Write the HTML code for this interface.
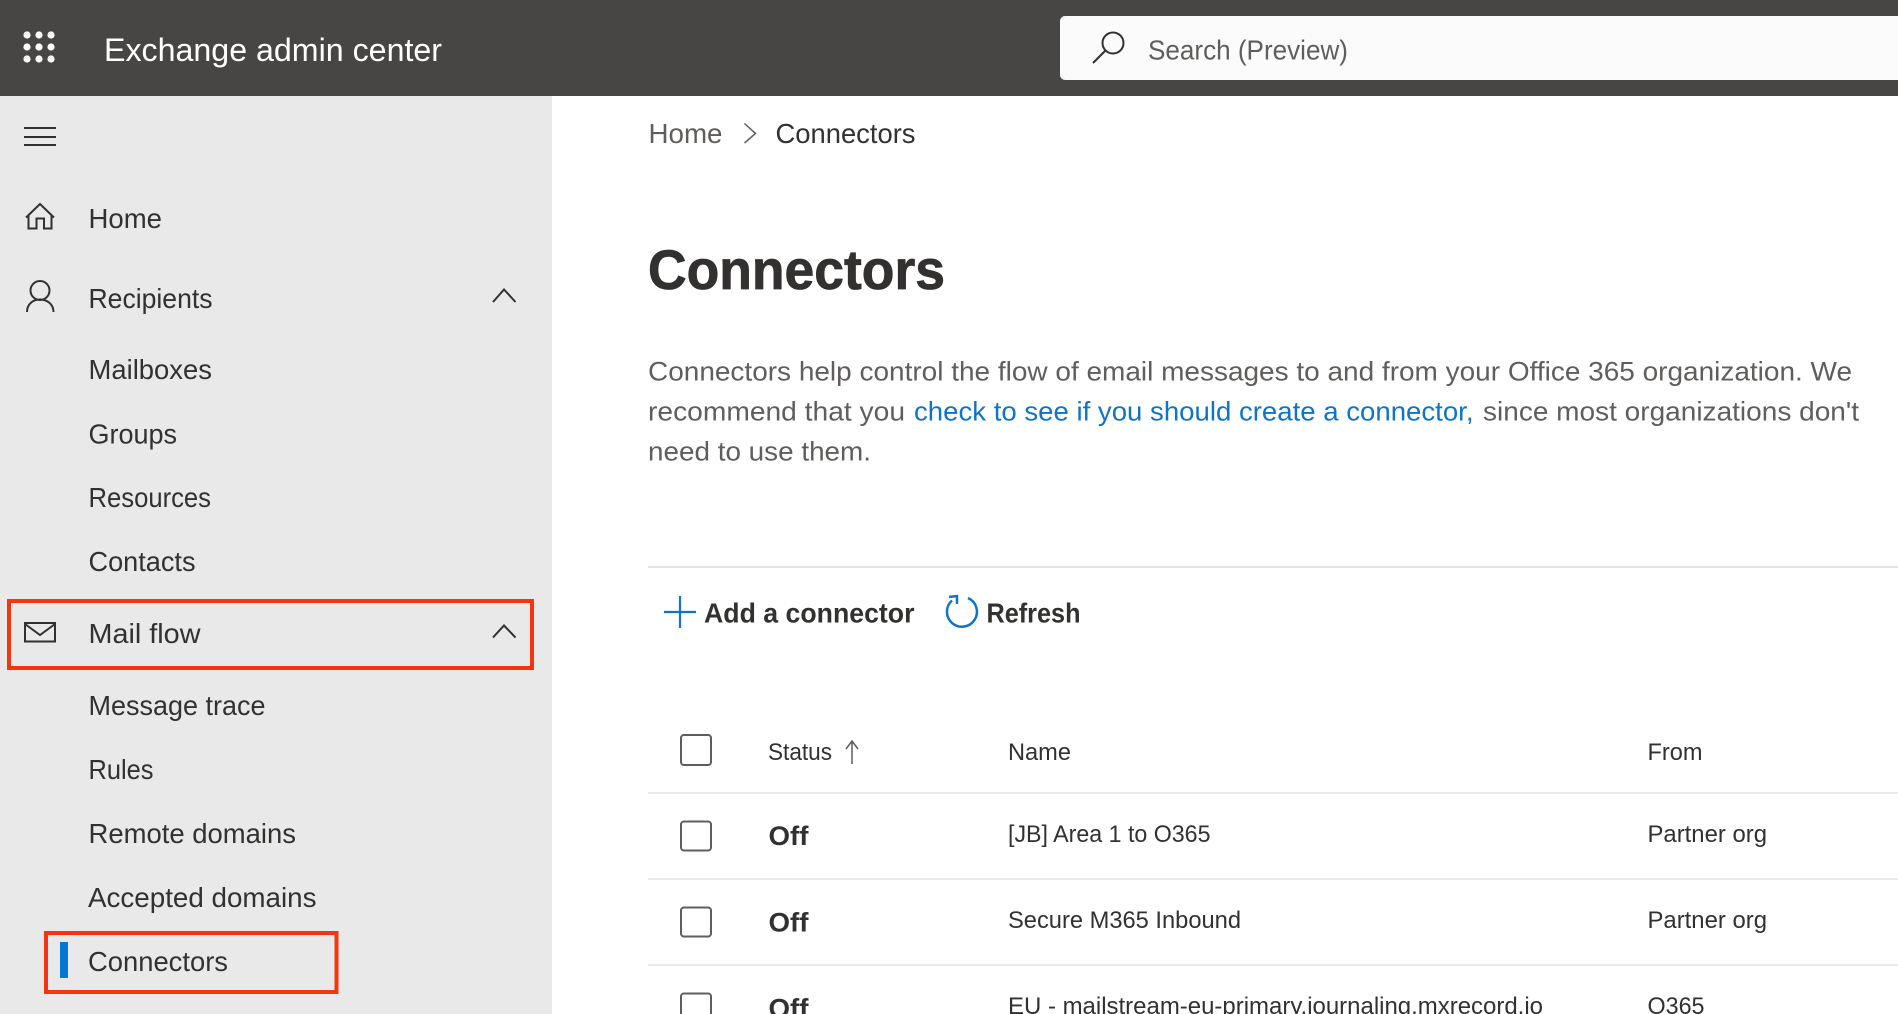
<!DOCTYPE html>
<html lang="en">
<head>
<meta charset="utf-8">
<title>Exchange admin center - Connectors</title>
<style>
html,body{margin:0;padding:0;width:1898px;height:1014px;overflow:hidden;background:#fff}
svg{display:block}
text{font-family:"Liberation Sans",Arial,sans-serif;fill:#323130}
.n{font-size:28px}
.t{font-size:24px}
.p{font-size:27px;fill:#605e5c}
.l{font-size:27px;fill:#0f74c8}
.b{font-size:27px;font-weight:700}
.a{font-size:28px;font-weight:700}
.i{fill:none;stroke:#323130;stroke-width:2}
.c{fill:none;stroke:#605e5c;stroke-width:2}
</style>
</head>
<body>
<svg xmlns="http://www.w3.org/2000/svg" width="1898" height="1014" viewBox="0 0 1898 1014">
<!-- shell -->
<rect width="1898" height="1014" fill="#fff"/>
<rect y="96" width="552" height="918" fill="#e9e9e9"/>
<rect width="1898" height="96" fill="#484644"/>
<rect x="1060" y="16" width="860" height="64" rx="5" fill="#fbfbfb"/>

<!-- waffle -->
<g fill="#fff">
<circle cx="27" cy="35" r="3.600"/><circle cx="39" cy="35" r="3.600"/><circle cx="51" cy="35" r="3.600"/>
<circle cx="27" cy="47" r="3.600"/><circle cx="39" cy="47" r="3.600"/><circle cx="51" cy="47" r="3.600"/>
<circle cx="27" cy="59" r="3.600"/><circle cx="39" cy="59" r="3.600"/><circle cx="51" cy="59" r="3.600"/>
</g>
<text x="104" y="61" font-size="32" style="fill:#fff" textLength="338" lengthAdjust="spacingAndGlyphs">Exchange admin center</text>

<!-- search -->
<circle cx="1113" cy="43" r="10.500" class="i"/>
<path d="M1105.500 50.500L1093 63" class="i"/>
<text x="1148" y="59.500" font-size="28" style="fill:#605e5c" textLength="200" lengthAdjust="spacingAndGlyphs">Search (Preview)</text>

<!-- nav icons -->
<path d="M24 128H56M24 137H56M24 145H56" class="i"/>
<path d="M26 217.500L40 204L54 217.500M28.500 215V228.500H36.500V218.500H44V228.500H51.500V215" class="i"/>
<circle cx="40" cy="290.500" r="9.500" class="i"/>
<path d="M27 312C27 304 33 299.500 40 299.500C47 299.500 53.500 304 53.500 312" class="i"/>
<path d="M493 302L504 289.500L515.500 302" class="i"/>
<rect x="25" y="623" width="30" height="18.500" class="i"/>
<path d="M25 624L40 635L55 624" class="i"/>
<path d="M493 637.500L504 625.500L515.500 637.500" class="i"/>

<!-- nav text -->
<text class="n" x="88.500" y="228" textLength="73.500" lengthAdjust="spacingAndGlyphs">Home</text>
<text class="n" x="88.500" y="308" textLength="124" lengthAdjust="spacingAndGlyphs">Recipients</text>
<text class="n" x="88.500" y="379" textLength="123.500" lengthAdjust="spacingAndGlyphs">Mailboxes</text>
<text class="n" x="88.500" y="443.500" textLength="88.500" lengthAdjust="spacingAndGlyphs">Groups</text>
<text class="n" x="88.500" y="507" textLength="122.500" lengthAdjust="spacingAndGlyphs">Resources</text>
<text class="n" x="88.500" y="571" textLength="107" lengthAdjust="spacingAndGlyphs">Contacts</text>
<text class="n" x="88.500" y="643" textLength="112" lengthAdjust="spacingAndGlyphs">Mail flow</text>
<text class="n" x="88.500" y="715" textLength="177" lengthAdjust="spacingAndGlyphs">Message trace</text>
<text class="n" x="88.500" y="779" textLength="65" lengthAdjust="spacingAndGlyphs">Rules</text>
<text class="n" x="88.500" y="843" textLength="207.500" lengthAdjust="spacingAndGlyphs">Remote domains</text>
<text class="n" x="88" y="907" textLength="228.500" lengthAdjust="spacingAndGlyphs">Accepted domains</text>
<text class="n" x="88" y="971" textLength="140" lengthAdjust="spacingAndGlyphs">Connectors</text>
<rect x="60" y="942" width="8" height="36" fill="#0078d4"/>

<!-- highlight boxes -->
<rect x="9" y="601" width="523" height="67" fill="none" stroke="#f53510" stroke-width="4"/>
<rect x="46" y="933" width="290.500" height="59" fill="none" stroke="#f53510" stroke-width="4"/>

<!-- breadcrumb -->
<text x="648.500" y="143" font-size="28" style="fill:#605e5c" textLength="74" lengthAdjust="spacingAndGlyphs">Home</text>
<path d="M744.500 123.500L755.500 133.500L744.500 143" fill="none" stroke="#605e5c" stroke-width="1.500"/>
<text x="775.500" y="143" font-size="28" textLength="140" lengthAdjust="spacingAndGlyphs">Connectors</text>

<!-- heading -->
<text x="648" y="289" font-size="56" font-weight="700" stroke="#323130" stroke-width="0.800" textLength="297" lengthAdjust="spacingAndGlyphs">Connectors</text>

<!-- paragraph -->
<text class="p" x="648" y="380.500" textLength="1204" lengthAdjust="spacingAndGlyphs">Connectors help control the flow of email messages to and from your Office 365 organization. We</text>
<text class="p" x="648" y="420.500" textLength="257" lengthAdjust="spacingAndGlyphs">recommend that you</text>
<text class="l" x="914" y="420.500" textLength="559.500" lengthAdjust="spacingAndGlyphs">check to see if you should create a connector,</text>
<text class="p" x="1483" y="420.500" textLength="376" lengthAdjust="spacingAndGlyphs">since most organizations don't</text>
<text class="p" x="648" y="460.500" textLength="223" lengthAdjust="spacingAndGlyphs">need to use them.</text>

<!-- toolbar -->
<rect x="648" y="566" width="1250" height="2" fill="#e4e4e4"/>
<path d="M664 612H696M680 596V628" fill="none" stroke="#0f74c8" stroke-width="2.200"/>
<text class="a" x="704" y="622.500" textLength="210.500" lengthAdjust="spacingAndGlyphs">Add a connector</text>
<path d="M968 598A15 15 0 1 1 952 600.500" fill="none" stroke="#0f74c8" stroke-width="2.500"/>
<path d="M949 597L957 596L957 604" fill="none" stroke="#0f74c8" stroke-width="2.500"/>
<text class="a" x="986.500" y="622.500" textLength="94" lengthAdjust="spacingAndGlyphs">Refresh</text>

<!-- table header -->
<rect x="681" y="735" width="30" height="30" rx="3" class="c"/>
<text class="t" x="768" y="760" textLength="64" lengthAdjust="spacingAndGlyphs">Status</text>
<path d="M852 764V741M846 749L852 741L858 749" fill="none" stroke="#605e5c" stroke-width="1.500"/>
<text class="t" x="1008" y="760" textLength="63" lengthAdjust="spacingAndGlyphs">Name</text>
<text class="t" x="1647.500" y="760" textLength="55" lengthAdjust="spacingAndGlyphs">From</text>
<rect x="648" y="792" width="1250" height="2" fill="#edebe9"/>

<!-- row 1 -->
<rect x="681" y="821.500" width="30" height="29" rx="3" class="c"/>
<text class="b" x="768.500" y="845" textLength="40" lengthAdjust="spacingAndGlyphs">Off</text>
<text class="t" x="1008" y="842" textLength="202.500" lengthAdjust="spacingAndGlyphs">[JB] Area 1 to O365</text>
<text class="t" x="1647.500" y="842" textLength="119.500" lengthAdjust="spacingAndGlyphs">Partner org</text>
<rect x="648" y="878" width="1250" height="2" fill="#edebe9"/>

<!-- row 2 -->
<rect x="681" y="907.500" width="30" height="29" rx="3" class="c"/>
<text class="b" x="768.500" y="931.500" textLength="40" lengthAdjust="spacingAndGlyphs">Off</text>
<text class="t" x="1008" y="928" textLength="233" lengthAdjust="spacingAndGlyphs">Secure M365 Inbound</text>
<text class="t" x="1647.500" y="928" textLength="119.500" lengthAdjust="spacingAndGlyphs">Partner org</text>
<rect x="648" y="964" width="1250" height="2" fill="#edebe9"/>

<!-- row 3 -->
<rect x="681" y="993.500" width="30" height="29" rx="3" class="c"/>
<text class="b" x="768.500" y="1017.500" textLength="40" lengthAdjust="spacingAndGlyphs">Off</text>
<text class="t" x="1008" y="1014" textLength="535" lengthAdjust="spacingAndGlyphs">EU - mailstream-eu-primary.journaling.mxrecord.io</text>
<text class="t" x="1647.500" y="1014" textLength="57" lengthAdjust="spacingAndGlyphs">O365</text>
</svg>
</body>
</html>
